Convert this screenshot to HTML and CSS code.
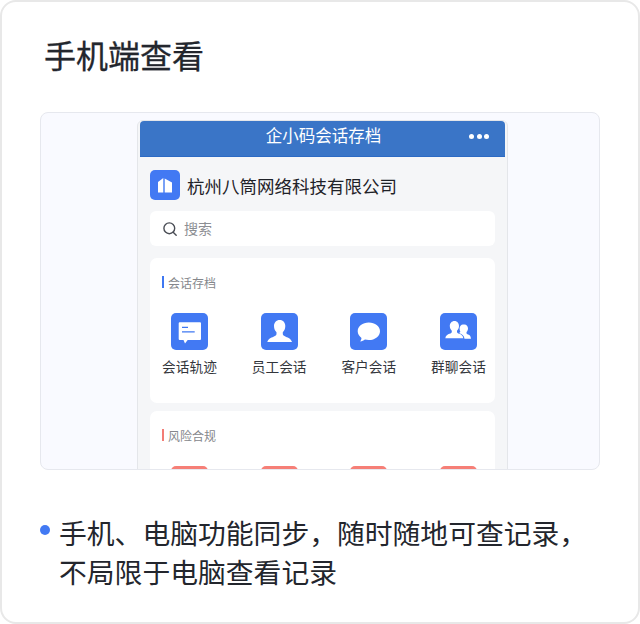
FILE: index.html
```html
<!DOCTYPE html>
<html lang="zh-CN">
<head>
<meta charset="utf-8">
<title>手机端查看</title>
<link rel="stylesheet" href="styles.css">
</head>
<body>
<main class="card">
  <h1 class="title">手机端查看</h1>
  <section class="preview">
    <div class="phone-frame">
      <div class="phone">
        <header class="bar">
          <span class="bar-title">企小码会话存档</span>
          <span class="dots"><i></i><i></i><i></i></span>
        </header>
        <div class="company">
          <span class="logo">
            <svg viewBox="0 0 30 30" width="30" height="30"><path fill="#fff" d="M8 12 13.300 8V22.500H8zM14.700 8.500 22 12.500V22.500H14.700z"/></svg>
          </span>
          <span class="company-name">杭州八筒网络科技有限公司</span>
        </div>
        <div class="search">
          <svg viewBox="0 0 16 16" width="16" height="16"><circle cx="7.3" cy="7.3" r="5.4" fill="none" stroke="#4a4d55" stroke-width="1.4"/><path d="M11.2 11.2 14.2 14.2" stroke="#4a4d55" stroke-width="1.4" stroke-linecap="round"/></svg>
          <span class="search-text">搜索</span>
        </div>
        <section class="panel">
          <h2 class="panel-title blue">会话存档</h2>
          <div class="grid">
            <div class="item">
              <span class="icon">
                <svg viewBox="0 0 37 37" width="37" height="37"><path fill="#fff" d="M8.700 9.300h20.300a1 1 0 0 1 1 1v15.700a1 1 0 0 1-1 1H16.700L14 30.500 12.500 27H8.700a1 1 0 0 1-1-1V10.300a1 1 0 0 1 1-1z"/><path fill="#3f78f2" d="M11 13.800h6v1.200h-6zM11 18.200h12.700v1.200H11z"/></svg>
              </span>
              <span class="label">会话轨迹</span>
            </div>
            <div class="item">
              <span class="icon">
                <svg viewBox="0 0 37 37" width="37" height="37"><path fill="#fff" d="M18.700 7c3.500 0 5.600 2.700 5.600 6.100 0 2.700-1.100 5-2.500 6.200v1.700c0 1.200 1 1.900 3 2.700 2.600 1 5.300 2 6.200 5.300H6.300c.9-3.300 3.600-4.300 6.200-5.300 2-.8 3-1.500 3-2.700v-1.700c-1.400-1.200-2.500-3.500-2.500-6.200C13 9.700 15.200 7 18.700 7z"/></svg>
              </span>
              <span class="label">员工会话</span>
            </div>
            <div class="item">
              <span class="icon">
                <svg viewBox="0 0 37 37" width="37" height="37"><path fill="#fff" d="M18.800 9.500c6.200 0 11.200 3.600 11.200 8.700s-5 8.800-11.200 8.800c-1.400 0-2.700-.2-3.900-.5-1.300.9-2.800 1.700-4.700 1.900.8-1.100 1.200-2.200 1.300-3.500-2.200-1.600-3.800-3.900-3.800-6.700 0-5.100 4.900-8.700 11.100-8.700z"/></svg>
              </span>
              <span class="label">客户会话</span>
            </div>
            <div class="item">
              <span class="icon">
                <svg viewBox="0 0 37 37" width="37" height="37"><path fill="#fff" d="M14.500 8c2.700 0 4.500 2.200 4.500 5 0 2-.9 3.700-2 4.700v1c0 1 .8 1.500 2.300 2.100 1.800.7 3.500 1.500 4 4.400H5.300c.5-2.900 2.400-3.700 4.200-4.400 1.500-.6 2.300-1.100 2.300-2.100v-1c-1.100-1-2-2.700-2-4.700 0-2.800 2-5 4.700-5z"/><path fill="#fff" d="M24.500 11.500c2 0 3.500 1.700 3.500 4 0 1.500-.7 2.900-1.500 3.600v.9c0 .8.600 1.200 1.700 1.600 1.300.5 2.400 1.100 2.800 4.100h-6.500c-.4-2.800-2-4.100-3.900-4.900-.9-.4-1.300-.6-1.300-1.100l1-.8v-.1c-.5-.9-.7-2-.7-3.300 0-2.300 1.500-4 3.400-4z"/></svg>
              </span>
              <span class="label">群聊会话</span>
            </div>
          </div>
        </section>
        <section class="panel">
          <h2 class="panel-title red">风险合规</h2>
          <div class="grid">
            <div class="item"><span class="icon red-icon"></span></div>
            <div class="item"><span class="icon red-icon"></span></div>
            <div class="item"><span class="icon red-icon"></span></div>
            <div class="item"><span class="icon red-icon"></span></div>
          </div>
        </section>
      </div>
    </div>
  </section>
  <div class="note">
    <span class="bullet"></span>
    <p class="note-text">手机、电脑功能同步，随时随地可查记录，<br>不局限于电脑查看记录</p>
  </div>
</main>
</body>
</html>
```
FILE: styles.css
```css
* { box-sizing: border-box; margin: 0; padding: 0; }
html, body { width: 640px; height: 624px; overflow: hidden; background: #fff; }
body { font-family: "Noto Sans CJK SC", "Noto Sans", sans-serif; color: #23262d; }
.card {
  width: 640px; height: 624px;
  border: 2px solid #e8e8e8;
  border-radius: 16px;
  padding: 0 38px;
  background: #fff;
}
.title { font-size: 32px; font-weight: 400; line-height: 44px; padding-top: 30px; height: 110px; padding-left: 4px; -webkit-text-stroke: 0.3px #23262d; }
.preview {
  height: 358px;
  background: #f9faff;
  border: 1px solid #e6e8ee;
  border-radius: 8px;
  display: flex;
  justify-content: center;
  overflow: hidden;
  padding: 7px 0 0 5px;
}
.phone-frame {
  width: 371px; height: 400px;
  border: 1px solid #e4e6ea;
  border-radius: 6px 6px 0 0;
  padding: 0 2px;
  background: #f5f6f8;
  flex: none;
}
.phone { background: #f5f6f8; height: 100%; }
.bar {
  height: 36px;
  background: #3a75c7;
  border-bottom: 1px solid #2c6ac4;
  border-radius: 4px 4px 0 0;
  color: #fff;
  display: flex;
  align-items: center;
  justify-content: center;
  position: relative;
}
.bar-title { font-size: 16.5px; line-height: 30px; margin: -7px 0 0 2px; }
.dots { position: absolute; right: 16px; top: 13px; display: flex; gap: 2.4px; }
.dots i { width: 5px; height: 5px; border-radius: 50%; background: #fff; display: block; }
.company { display: flex; align-items: flex-start; gap: 7px; padding: 13px 10px 0; height: 54px; }
.logo { width: 30px; height: 30px; background: #4279f3; border-radius: 5px; flex: none; display: block; }
.logo svg { display: block; }
.company-name { font-size: 17.5px; color: #1f2228; line-height: 30px; margin-top: 1px; }
.search {
  margin: 0 10px; height: 35px;
  background: #fff; border-radius: 6px;
  display: flex; align-items: center; gap: 6px;
  padding-left: 12px;
  font-size: 14px; color: #8c8e93;
}
.search-text { margin-top: -2px; }
.panel { margin: 12px 10px 0; background: #fff; border-radius: 7px; height: 145px; padding-top: 16px; }
.panel + .panel { margin-top: 8px; }
.panel-title { font-size: 12px; font-weight: 400; line-height: 17px; color: #85878c; padding-left: 6px; margin-left: 12px; position: relative; }
.panel-title::before { content: ""; position: absolute; left: 0; top: 2px; width: 2px; height: 12px; }
.blue::before { background: #3f78f2; }
.red::before { background: #f37d76; }
.grid { display: flex; justify-content: space-between; padding: 22px 9px 0 12px; }
.item { width: 55px; display: flex; flex-direction: column; align-items: center; }
.icon { width: 37px; height: 37px; border-radius: 5px; background: #4279f3; display: block; }
.icon svg { display: block; }
.red-icon { background: #f67f77; }
.label { font-size: 13.7px; line-height: 20px; margin-top: 6px; color: #33363c; white-space: nowrap; }
.note { display: flex; padding: 43px 0 0 0; }
.bullet { width: 10px; height: 10px; border-radius: 50%; background: #4279f3; flex: none; margin-top: 12px; }
.note-text { font-size: 27.8px; line-height: 39px; margin-left: 9px; color: #23262d; white-space: nowrap; }
```
